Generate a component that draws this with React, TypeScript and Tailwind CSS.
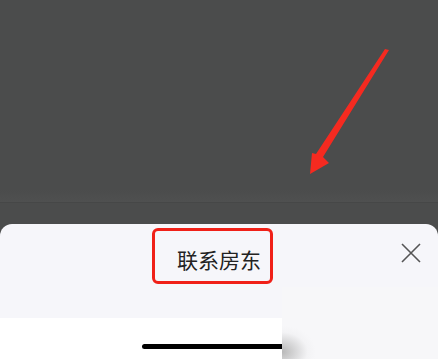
import React from "react";

export default function App() {
  return (
    <div
      className="relative w-[438px] h-[359px] overflow-hidden bg-[#4b4c4c]"
      style={{ fontFamily: '"Noto Sans CJK SC", "Noto Sans", sans-serif' }}
    >
      <div className="flex flex-col h-full">
        <div className="h-[190px] bg-[#4b4c4c]" />
        <div className="h-[12px] bg-gradient-to-b from-[#4b4c4c] to-[#4f5050]" />
        <div className="h-px bg-[#464747]" />
        <div className="h-[21px] bg-[#4b4c4c]" />
        <div className="flex-1 flex flex-col rounded-t-[12px] overflow-hidden">
          <div className="h-[94px] bg-[#f6f6fa] flex items-start justify-center relative">
            <div className="mt-[21px] text-[21px] leading-[28px] text-[#222]">联系房东</div>
            <svg
              className="absolute right-[17px] top-[19px]"
              width="20"
              height="20"
              viewBox="0 0 20 20"
            >
              <path d="M1 1 L19 19 M19 1 L1 19" stroke="#555" strokeWidth="1.6" fill="none" />
            </svg>
          </div>
          <div className="flex-1 bg-white flex justify-center">
            <div className="mt-[26px] w-[154px] h-[5px] rounded-full bg-black" />
          </div>
        </div>
      </div>

      {/* red annotation box */}
      <div className="absolute left-[152px] top-[228px] w-[121px] h-[56px] border-[3px] border-[#f02018] rounded-[6px]" />

      {/* red arrow */}
      <svg className="absolute left-0 top-0" width="438" height="359" viewBox="0 0 438 359">
        <polygon
          points="385,49 389,50 323,157 329,163 310,174 312,153 316,154"
          fill="#f52a20"
        />
      </svg>

      {/* blurred overlay region */}
      <div className="absolute left-[282px] top-[287px] w-[156px] h-[72px] bg-[radial-gradient(ellipse_34px_26px_at_0%_90%,#b8b8b8,#f3f3f5_75%,#f7f7f9)]" />
    </div>
  );
}
